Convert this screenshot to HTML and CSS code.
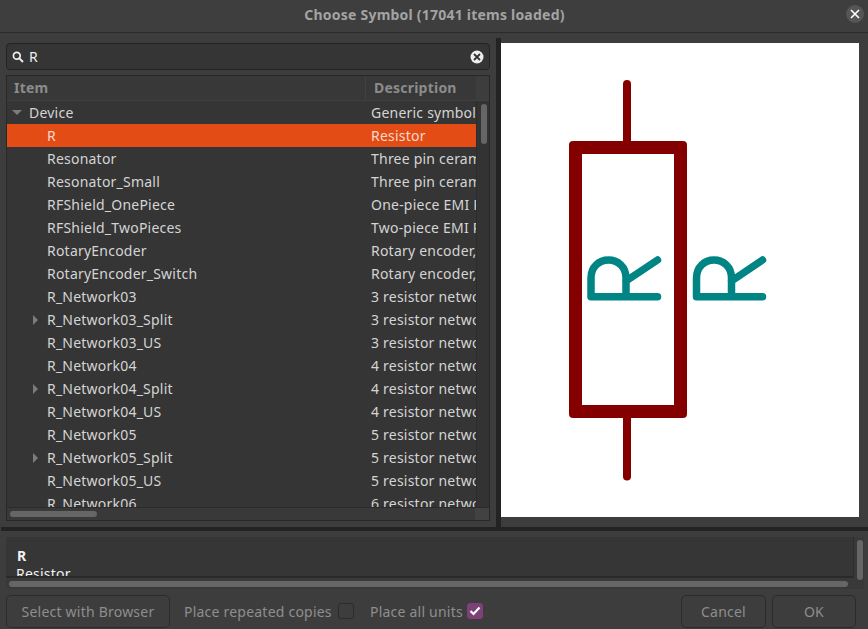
FILE: index.html
```html
<!DOCTYPE html>
<html lang="en">
<head>
<meta charset="utf-8">
<title>Choose Symbol</title>
<link rel="stylesheet" href="styles.css">
</head>
<body>
<div class="window">
  <header class="titlebar">
    <div class="title">Choose Symbol (17041 items loaded)</div>
    <div class="close"><svg width="10" height="10" viewBox="0 0 10 10"><path d="M1 1L9 9M9 1L1 9" stroke="#fff" stroke-width="1.6"/></svg></div>
  </header>
  <main class="upper">
    <section class="left">
      <div class="search">
        <svg class="search-icon" width="12" height="12" viewBox="0 0 12 12"><circle cx="4.8" cy="4.8" r="3.4" fill="none" stroke="#eee" stroke-width="1.7"/><path d="M7.4 7.4L11 11" stroke="#eee" stroke-width="2"/></svg>
        <span class="search-text">R</span>
        <svg class="clear-icon" width="14" height="14" viewBox="0 0 14 14"><circle cx="7" cy="7" r="6.5" fill="#eee"/><path d="M4 4L10 10M10 4L4 10" stroke="#333" stroke-width="1.8"/></svg>
      </div>
      <div class="tree">
        <div class="tree-head">
          <div class="col-item">Item</div>
          <div class="col-desc">Description</div>
          <div class="head-corner"></div>
        </div>
        <div class="tree-mid">
          <div class="rows">
            <div class="row"><div class="cell-item lvl0"><i class="arrow-down"></i>Device</div><div class="cell-desc">Generic symbols for common devices</div></div>
            <div class="row selected"><div class="cell-item">R</div><div class="cell-desc">Resistor</div></div>
            <div class="row"><div class="cell-item">Resonator</div><div class="cell-desc">Three pin ceramic resonator</div></div>
            <div class="row"><div class="cell-item">Resonator_Small</div><div class="cell-desc">Three pin ceramic resonator</div></div>
            <div class="row"><div class="cell-item">RFShield_OnePiece</div><div class="cell-desc">One-piece EMI RF shielding</div></div>
            <div class="row"><div class="cell-item">RFShield_TwoPieces</div><div class="cell-desc">Two-piece EMI RF shielding</div></div>
            <div class="row"><div class="cell-item">RotaryEncoder</div><div class="cell-desc">Rotary encoder, dual channel</div></div>
            <div class="row"><div class="cell-item">RotaryEncoder_Switch</div><div class="cell-desc">Rotary encoder, dual channel</div></div>
            <div class="row"><div class="cell-item">R_Network03</div><div class="cell-desc">3 resistor network, star</div></div>
            <div class="row"><div class="cell-item"><i class="arrow-right"></i>R_Network03_Split</div><div class="cell-desc">3 resistor network, star</div></div>
            <div class="row"><div class="cell-item">R_Network03_US</div><div class="cell-desc">3 resistor network, star</div></div>
            <div class="row"><div class="cell-item">R_Network04</div><div class="cell-desc">4 resistor network, star</div></div>
            <div class="row"><div class="cell-item"><i class="arrow-right"></i>R_Network04_Split</div><div class="cell-desc">4 resistor network, star</div></div>
            <div class="row"><div class="cell-item">R_Network04_US</div><div class="cell-desc">4 resistor network, star</div></div>
            <div class="row"><div class="cell-item">R_Network05</div><div class="cell-desc">5 resistor network, star</div></div>
            <div class="row"><div class="cell-item"><i class="arrow-right"></i>R_Network05_Split</div><div class="cell-desc">5 resistor network, star</div></div>
            <div class="row"><div class="cell-item">R_Network05_US</div><div class="cell-desc">5 resistor network, star</div></div>
            <div class="row"><div class="cell-item">R_Network06</div><div class="cell-desc">6 resistor network, star</div></div>
          </div>
          <div class="vscroll"><div class="vthumb"></div></div>
        </div>
        <div class="tree-foot"><div class="hthumb"></div><div class="foot-corner"></div></div>
      </div>
    </section>
    <div class="vsash"></div>
    <section class="preview">
      <svg class="symbol" width="358" height="474" viewBox="501 43 358 474">
        <path d="M627 84V141M627 417V476.500" stroke="#840000" stroke-width="8" stroke-linecap="round" fill="none"/>
        <path fill="#840000" fill-rule="evenodd" d="M573 141H683Q687 141 687 145V414Q687 418 683 418H573Q569 418 569 414V145Q569 141 573 141ZM582 154V405H674V154Z"/>
        <g fill="none" stroke="#008484" stroke-width="7.500" stroke-linecap="round" stroke-linejoin="round">
          <path d="M657.500 296.700H591V278C591 267 599 260 608.500 260C618 260 626 267 626 278V296.700M626 281L657.500 260"/>
          <path d="M762.500 296.700H696.500V278C696.500 267 704.500 260 714 260C723.500 260 731.500 267 731.500 278V296.700M731.500 281L762.500 260"/>
        </g>
      </svg>
    </section>
  </main>
  <div class="hsash"></div>
  <section class="details">
    <div class="details-inner">
      <div class="details-text">
        <div class="details-name">R</div>
        <div class="details-desc">Resistor</div>
      </div>
      <div class="details-hbar"><div class="details-hthumb"></div></div>
    </div>
    <div class="details-vbar"><div class="details-vthumb"></div></div>
  </section>
  <footer class="actions">
    <button class="btn btn-browser">Select with Browser</button>
    <label class="check-label label-first">Place repeated copies</label>
    <span class="check"></span>
    <label class="check-label label-second">Place all units</label>
    <span class="check checked"><svg width="12" height="10" viewBox="0 0 12 10"><path d="M1.500 5L4.500 8L10.500 1.500" fill="none" stroke="#fff" stroke-width="2.200"/></svg></span>
    <div class="spacer"></div>
    <button class="btn btn-cancel">Cancel</button>
    <button class="btn btn-ok">OK</button>
  </footer>
</div>
</body>
</html>
```
FILE: styles.css
```css
* { box-sizing: border-box; }
html, body { margin: 0; padding: 0; }
body {
  width: 868px;
  height: 629px;
  overflow: hidden;
  background: #3d3d3d;
  font-family: "Noto Sans", "Open Sans", sans-serif;
  font-size: 14px;
  letter-spacing: 0.22px;
  color: #d6d6d6;
}
.window { width: 868px; height: 629px; display: flex; flex-direction: column; }
.titlebar {
  height: 33px;
  flex: none;
  display: flex;
  align-items: center;
  justify-content: center;
  position: relative;
  background: #3e3e3e;
  border-bottom: 1px solid #2a2a2a;
}
.title { font-weight: 700; font-size: 14px; color: #a3a3a3; margin-left: 1px; margin-top: -3px; }
.close {
  position: absolute;
  right: 4px;
  top: 5px;
  width: 18px;
  height: 18px;
  border-radius: 50%;
  background: #555;
  display: flex;
  align-items: center;
  justify-content: center;
}
.upper { height: 494px; flex: none; display: flex; padding-top: 10px; }
.left { width: 491px; flex: none; padding-left: 6px; display: flex; flex-direction: column; }
.search {
  height: 27px;
  flex: none;
  margin-right: 1px;
  border: 1px solid #232323;
  border-radius: 4px;
  background: #353535;
  display: flex;
  align-items: center;
  padding: 0 5px 0 5px;
}
.search-icon { flex: none; }
.search-text { margin-left: 5px; flex: 1; color: #eee; font-size: 14px; }
.clear-icon { flex: none; }
.tree {
  margin-top: 5px;
  width: 484px;
  height: 446px;
  flex: none;
  border: 1px solid #282828;
  background: #353535;
  display: flex;
  flex-direction: column;
}
.tree-head { height: 25px; flex: none; display: flex; background: #383838; border-bottom: 1px solid #404040; font-weight: 700; color: #8b8b8b; }
.col-item { width: 359px; padding: 2px 0 0 7px; border-right: 1px solid #404040; }
.col-desc { width: 110px; padding: 2px 0 0 8px; }
.head-corner { flex: 1; background: #3d3d3d; }
.tree-mid { height: 406px; flex: none; display: flex; overflow: hidden; }
.rows { width: 469px; flex: none; overflow: hidden; }
.row { height: 23px; display: flex; line-height: 23px; white-space: nowrap; color: #d4d4d4; }
.row.selected { background: #e44c15; color: #f6d8cc; }
.cell-item { width: 364px; flex: none; padding-left: 40px; position: relative; }
.cell-item.lvl0 { padding-left: 22px; }
.cell-desc { width: 105px; flex: none; overflow: hidden; }
.arrow-down {
  position: absolute;
  left: 5px;
  top: 9px;
  border-left: 5px solid transparent;
  border-right: 5px solid transparent;
  border-top: 5px solid #7c7c7c;
}
.arrow-right {
  position: absolute;
  left: 26px;
  top: 7px;
  border-top: 5px solid transparent;
  border-bottom: 5px solid transparent;
  border-left: 5px solid #7c7c7c;
}
.vscroll { flex: 1; background: #333; border-left: 1px solid #2c2c2c; padding: 3px 3px 0 4px; }
.vthumb { width: 6px; height: 40px; border-radius: 3px; background: #666; }
.tree-foot { flex: 1; display: flex; align-items: center; justify-content: space-between; background: #393939; border-top: 1px solid #2b2b2b; padding-left: 3px; }
.hthumb { width: 87px; height: 6px; border-radius: 3px; background: #666; }
.foot-corner { width: 14px; height: 100%; background: #424242; }
.vsash { width: 5px; flex: none; margin: -5px -5px 0 5px; background: #232323; }
.preview { width: 358px; flex: none; height: 474px; margin-left: 5px; background: #fff; }
.symbol { display: block; }
.hsash { height: 4px; flex: none; margin-left: 1px; background: #232323; }
.details { height: 52px; margin: 6px 4px 0 6px; flex: none; display: flex; background: #393939; }
.details-inner { width: 848px; flex: none; display: flex; flex-direction: column; }
.details-text { height: 41px; flex: none; overflow: hidden; padding: 10px 0 0 11px; background: #363636; border-right: 1px solid #2d2d2d; border-bottom: 2px solid #2a2a2a; line-height: 18px; color: #f2f2f2; }
.details-name { font-weight: 700; font-size: 14px; }
.details-desc { font-size: 14px; margin-left: -1px; }
.details-hbar { flex: 1; padding: 3px 0 0 3px; }
.details-hthumb { width: 839px; height: 6px; border-radius: 3px; background: #666; }
.details-vbar { flex: 1; padding: 3px 0 0 3px; }
.details-vthumb { width: 6px; height: 40px; border-radius: 3px; background: #666; }
.actions { flex: 1; display: flex; align-items: center; padding: 0 12px 0 6px; margin-top: 5px; margin-bottom: 1px; }
.btn {
  height: 33px;
  border: 1px solid #2b2b2b;
  border-radius: 5px;
  background: #3d3d3d;
  color: #8e8e8e;
  font: inherit;
  letter-spacing: inherit;
  padding: 0;
}
.btn-browser { width: 164px; }
.btn-cancel { width: 85px; }
.btn-ok { width: 84px; margin-left: 6px; }
.check-label { color: #8e8e8e; white-space: nowrap; }
.label-first { margin-left: 14px; width: 154px; }
.label-second { margin-left: 16px; width: 97px; }
.check { width: 16px; height: 16px; flex: none; border: 1px solid #2b2b2b; border-radius: 3px; background: #3d3d3d; display: flex; align-items: center; justify-content: center; }
.check.checked { background: #7d4178; border-color: #7d4178; }
.spacer { flex: 1; }
```
